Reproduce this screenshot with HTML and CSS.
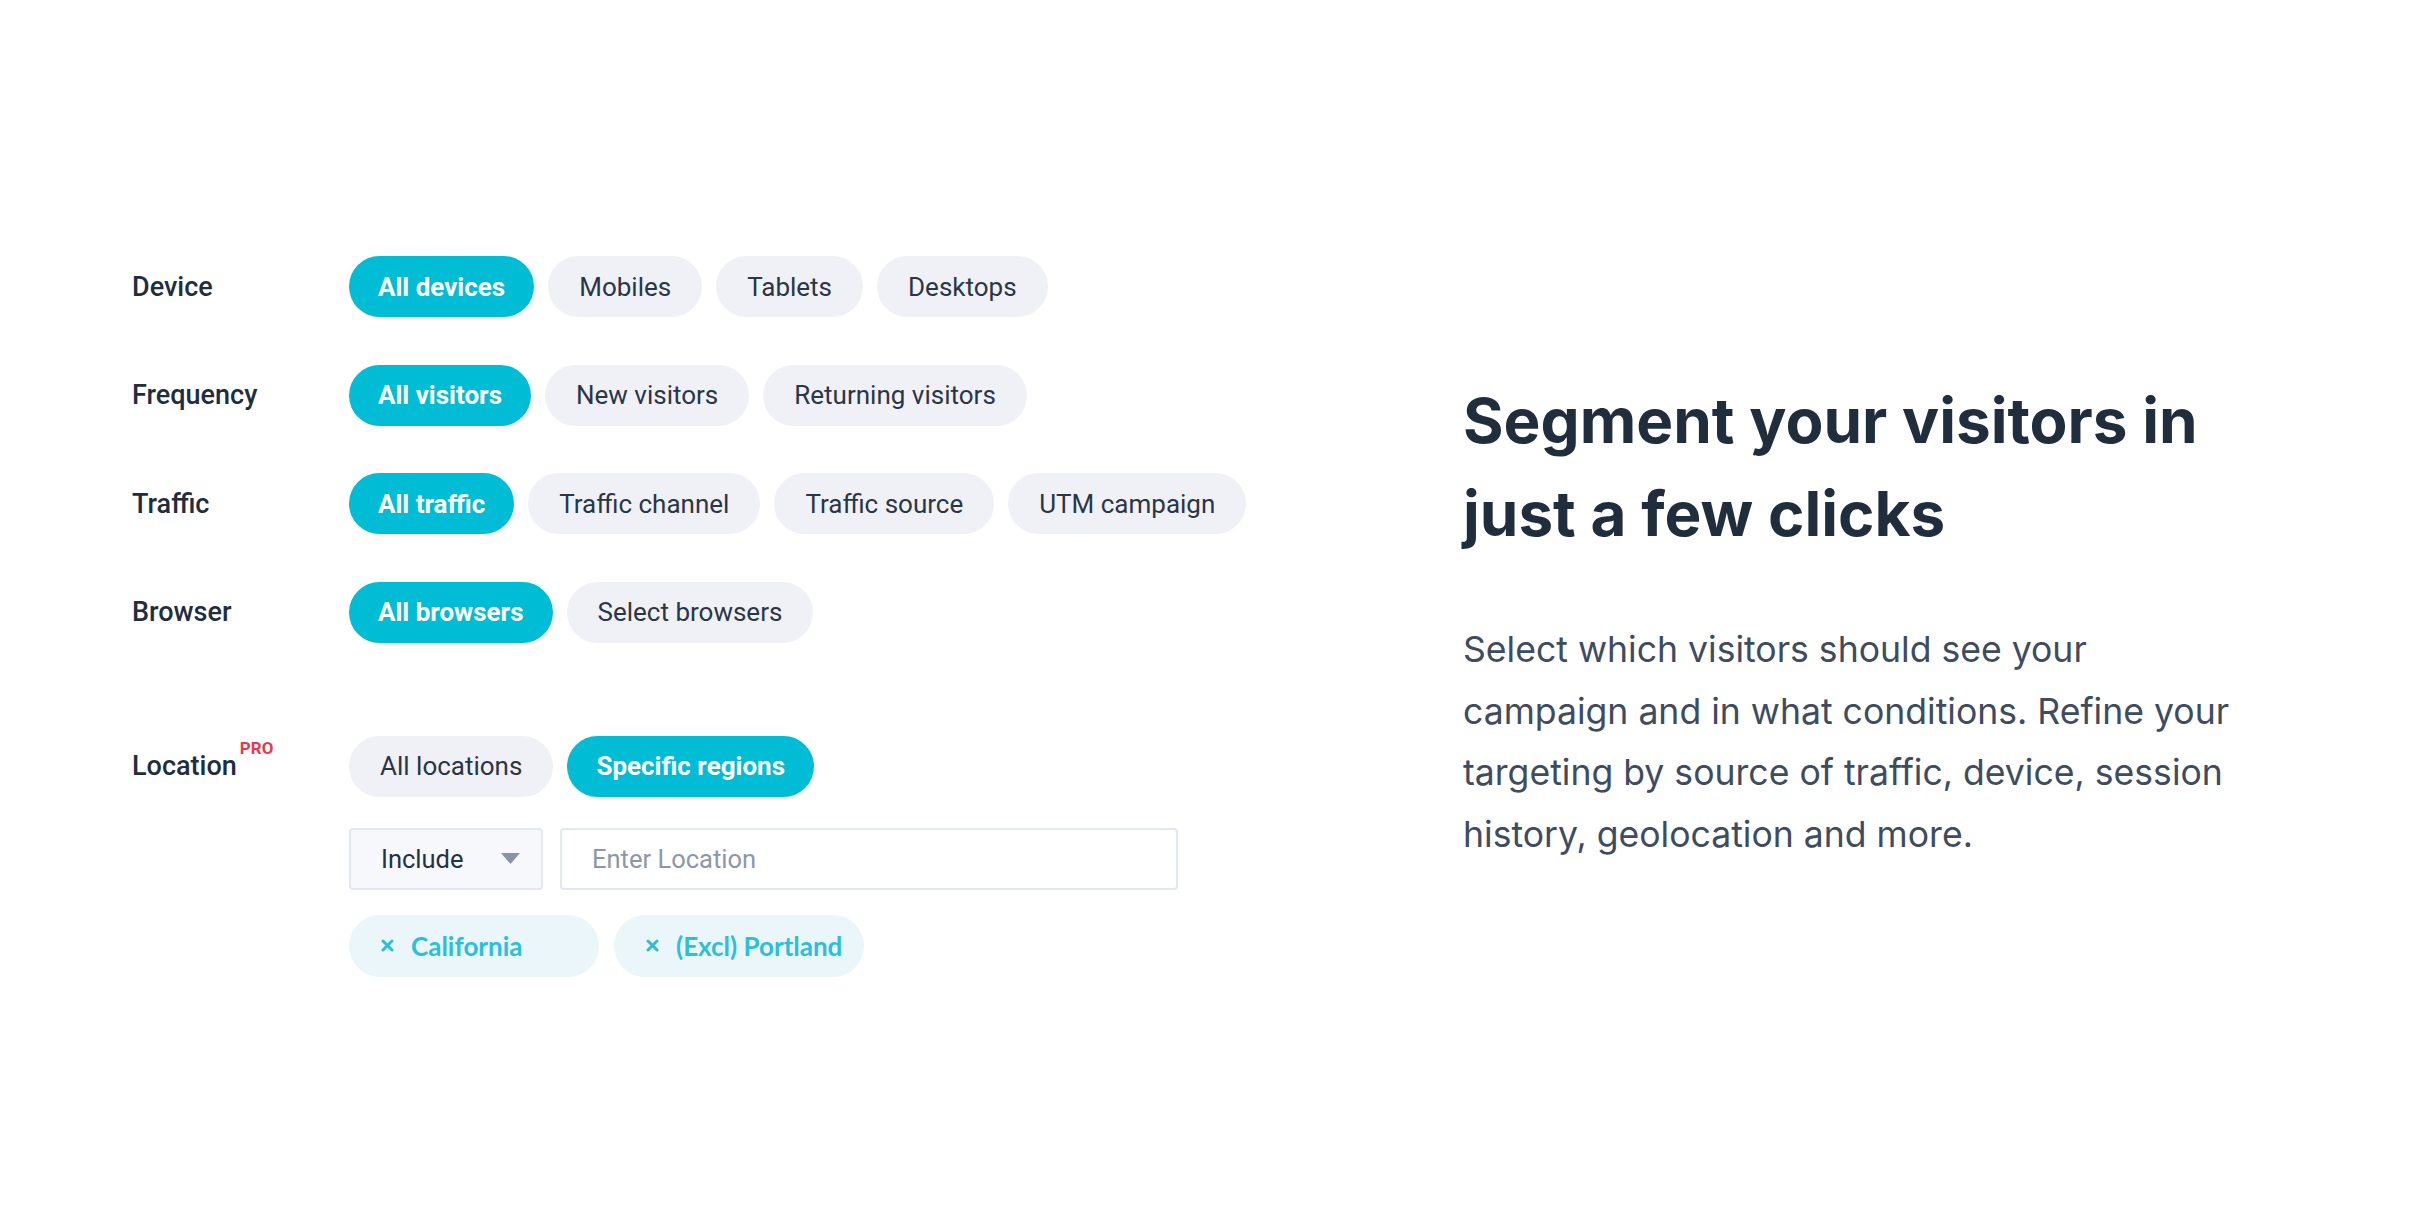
FILE: index.html
```html
<!DOCTYPE html>
<html lang="en">
<head>
<meta charset="utf-8">
<title>Segment your visitors</title>
<link rel="stylesheet" href="styles.css">
</head>
<body>
<main class="page">
  <section class="targeting">
    <div class="row">
      <div class="label">Device</div>
      <div class="pills">
        <span class="pill active">All devices</span>
        <span class="pill">Mobiles</span>
        <span class="pill">Tablets</span>
        <span class="pill">Desktops</span>
      </div>
    </div>
    <div class="row">
      <div class="label">Frequency</div>
      <div class="pills">
        <span class="pill active">All visitors</span>
        <span class="pill">New visitors</span>
        <span class="pill">Returning visitors</span>
      </div>
    </div>
    <div class="row">
      <div class="label">Traffic</div>
      <div class="pills">
        <span class="pill active">All traffic</span>
        <span class="pill">Traffic channel</span>
        <span class="pill">Traffic source</span>
        <span class="pill">UTM campaign</span>
      </div>
    </div>
    <div class="row">
      <div class="label">Browser</div>
      <div class="pills">
        <span class="pill active">All browsers</span>
        <span class="pill">Select browsers</span>
      </div>
    </div>

    <div class="location">
      <div class="row">
        <div class="label">Location<sup class="pro">PRO</sup></div>
        <div class="pills">
          <span class="pill">All locations</span>
          <span class="pill active">Specific regions</span>
        </div>
      </div>
      <div class="sub-row">
        <div class="select">
          <span>Include</span>
          <svg class="caret" width="19" height="11" viewBox="0 0 19 11"><path d="M0 0 H19 L9.5 11 Z" fill="#8a94a6"/></svg>
        </div>
        <div class="input">Enter Location</div>
      </div>
      <div class="sub-row tags">
        <span class="tag">
          <svg class="x" width="13" height="13" viewBox="0 0 13 13"><path d="M2 2 L11 11 M11 2 L2 11" stroke="#2cc0d8" stroke-width="3" stroke-linecap="round"/></svg>
          California
        </span>
        <span class="tag">
          <svg class="x" width="13" height="13" viewBox="0 0 13 13"><path d="M2 2 L11 11 M11 2 L2 11" stroke="#2cc0d8" stroke-width="3" stroke-linecap="round"/></svg>
          (Excl) Portland
        </span>
      </div>
    </div>
  </section>

  <section class="copy">
    <h1 class="title">Segment your visitors in just a few clicks</h1>
    <p class="text">Select which visitors should see your campaign and in what conditions. Refine your targeting by source of traffic, device, session history, geolocation and more.</p>
  </section>
</main>
</body>
</html>
```

FILE: styles.css
```css
* { box-sizing: border-box; }

html, body {
  margin: 0;
  padding: 0;
  background: #ffffff;
}

body {
  font-family: Roboto, "Liberation Sans", sans-serif;
  color: #1f2d3d;
  width: 2436px;
  height: 1218px;
  overflow: hidden;
}

.page {
  display: flex;
  align-items: flex-start;
  padding: 256px 0 0 132px;
}

.targeting {
  width: 1331px;
  display: flex;
  flex-direction: column;
  gap: 47.5px;
}

.row {
  display: flex;
  align-items: center;
  height: 61px;
}

.label {
  width: 217px;
  flex: none;
  font-size: 27px;
  font-weight: 500;
  color: #1f2d3d;
  position: relative;
}

.pro {
  font-size: 17px;
  font-weight: 700;
  color: #e8394b;
  vertical-align: top;
  position: relative;
  top: -10px;
  margin-left: 3px;
  line-height: 1;
}

.pills {
  display: flex;
  gap: 14px;
}

.pill {
  display: inline-flex;
  align-items: center;
  height: 61px;
  padding: 0 31px;
  border-radius: 31px;
  background: #f0f1f6;
  color: #2a3646;
  font-size: 26px;
  font-weight: 400;
  white-space: nowrap;
}

.pill.active {
  background: #00bcd4;
  color: #ffffff;
  font-weight: 700;
  padding: 0 29px;
}

.location {
  margin-top: 45.5px;
  display: flex;
  flex-direction: column;
}

.sub-row {
  display: flex;
  margin-left: 217px;
  margin-top: 31px;
  gap: 17px;
}

.sub-row.tags {
  margin-top: 25px;
  gap: 15px;
}

.select {
  width: 194px;
  height: 62px;
  display: flex;
  align-items: center;
  justify-content: space-between;
  padding: 0 21px 0 30px;
  background: #f7f8fb;
  border: 2px solid #e3e7ee;
  border-radius: 4px;
  font-size: 25.5px;
  color: #253243;
}

.input {
  width: 618px;
  height: 62px;
  display: flex;
  align-items: center;
  padding: 0 30px;
  background: #ffffff;
  border: 2px solid #e3e7ee;
  border-radius: 4px;
  font-size: 25.5px;
  color: #8c97aa;
}

.tag {
  width: 250px;
  height: 62px;
  display: flex;
  align-items: center;
  gap: 17px;
  padding: 0 32px;
  border-radius: 31px;
  background: #eaf6fa;
  color: #2cc0d8;
  font-family: Lato, Roboto, sans-serif;
  font-size: 26px;
  font-weight: 700;
  white-space: nowrap;
}

.x { flex: none; }

.copy {
  width: 790px;
  padding-top: 118px;
}

.title {
  margin: 0;
  font-family: Inter, Roboto, sans-serif;
  font-size: 62px;
  font-weight: 700;
  line-height: 93px;
  color: #1f2d3d;
}

.text {
  margin: 59px 0 0;
  font-family: Inter, Roboto, sans-serif;
  font-size: 35.6px;
  line-height: 61.7px;
  font-weight: 400;
  color: #3e4c5e;
}
```
